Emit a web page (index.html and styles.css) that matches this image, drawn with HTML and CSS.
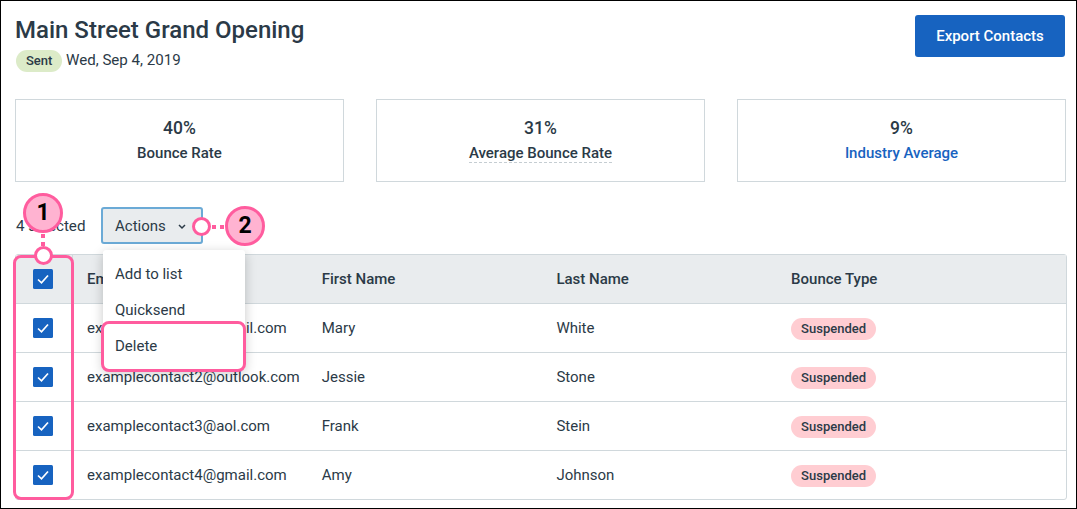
FILE: index.html
```html
<!DOCTYPE html>
<html lang="en">
<head>
  <meta charset="UTF-8" />
  <title>Main Street Grand Opening</title>
  <link rel="stylesheet" href="styles.css">
</head>
<body>
  <div class="frame">
    <div class="header">
      <div>
        <h1>Main Street Grand Opening</h1>
        <div class="meta"><span class="pill pill-green">Sent</span> <span>Wed, Sep 4, 2019</span></div>
      </div>
      <button class="export">Export Contacts</button>
    </div>

    <div class="stats">
      <div class="stat"><div class="stat-num">40%</div><div class="stat-label">Bounce Rate</div></div>
      <div class="stat"><div class="stat-num">31%</div><div class="stat-label dashed">Average Bounce Rate</div></div>
      <div class="stat"><div class="stat-num">9%</div><div class="stat-label link">Industry Average</div></div>
    </div>

    <div class="toolbar">
      <span class="selected">4 selected</span>
      <button class="actions">Actions
        <svg width="8" height="6" viewBox="0 0 8 6"><path d="M1 1l3 3 3-3" fill="none" stroke="#2b3a47" stroke-width="1.5"/></svg>
      </button>
    </div>

    <div class="table">
      <div class="row head">
        <div class="check"><svg class="box" viewBox="0 0 20 20"><rect width="20" height="20" rx="1.5" fill="#1763c0"/><path d="M5 10.5l3.5 3.3L15 6.5" fill="none" stroke="#fff" stroke-width="1.7"/></svg></div>
        <div>Email</div><div>First Name</div><div>Last Name</div><div>Bounce Type</div>
      </div>
      <div class="row">
        <div class="check"><svg class="box" viewBox="0 0 20 20"><rect width="20" height="20" rx="1.5" fill="#1763c0"/><path d="M5 10.5l3.5 3.3L15 6.5" fill="none" stroke="#fff" stroke-width="1.7"/></svg></div>
        <div>examplecontact1@gmail.com</div><div>Mary</div><div>White</div><div><span class="pill pill-red">Suspended</span></div>
      </div>
      <div class="row">
        <div class="check"><svg class="box" viewBox="0 0 20 20"><rect width="20" height="20" rx="1.5" fill="#1763c0"/><path d="M5 10.5l3.5 3.3L15 6.5" fill="none" stroke="#fff" stroke-width="1.7"/></svg></div>
        <div>examplecontact2@outlook.com</div><div>Jessie</div><div>Stone</div><div><span class="pill pill-red">Suspended</span></div>
      </div>
      <div class="row">
        <div class="check"><svg class="box" viewBox="0 0 20 20"><rect width="20" height="20" rx="1.5" fill="#1763c0"/><path d="M5 10.5l3.5 3.3L15 6.5" fill="none" stroke="#fff" stroke-width="1.7"/></svg></div>
        <div>examplecontact3@aol.com</div><div>Frank</div><div>Stein</div><div><span class="pill pill-red">Suspended</span></div>
      </div>
      <div class="row">
        <div class="check"><svg class="box" viewBox="0 0 20 20"><rect width="20" height="20" rx="1.5" fill="#1763c0"/><path d="M5 10.5l3.5 3.3L15 6.5" fill="none" stroke="#fff" stroke-width="1.7"/></svg></div>
        <div>examplecontact4@gmail.com</div><div>Amy</div><div>Johnson</div><div><span class="pill pill-red">Suspended</span></div>
      </div>
    </div>

    <!-- dropdown and callouts sit over the table -->
    <div class="menu">
      <div class="menu-item">Add to list</div>
      <div class="menu-item">Quicksend</div>
      <div class="menu-item">Delete</div>
    </div>
    <div class="mark mark-column"></div>
    <div class="mark mark-delete"></div>
    <div class="dots dots-v"></div>
    <div class="dots dots-h"></div>
    <div class="ring ring-1"></div>
    <div class="ring ring-2"></div>
    <div class="badge badge-1">1</div>
    <div class="badge badge-2">2</div>
  </div>
</body>
</html>
```

FILE: styles.css
```css
* { box-sizing: border-box; }
body { margin: 0; background: #fff; font-family: 'Roboto', sans-serif; color: #2b3a47; font-size: 15px; }
.frame {
  position: relative; width: 1077px; height: 509px; overflow: hidden; background: #fff;
  border: 1px solid #000; padding: 14px 10px 0 14px;
}
.header { display: flex; justify-content: space-between; align-items: flex-start; height: 84px; }
h1 { margin: 0; font-size: 24px; line-height: 30px; font-weight: 500; }
.meta { display: flex; align-items: center; gap: 4px; margin-top: 3px; font-size: 15.1px; color: #2b3a47; }
.pill { display: inline-block; border-radius: 11px; font-size: 13px; font-weight: 500; line-height: 22px; height: 22px; }
.pill-green { background: #dcebc8; padding: 0 10px; margin-left: 1px; margin-top: 2px; width: 46px; }
.pill-red { background: #ffcdd2; width: 85px; text-align: center; position: relative; top: 1px; }
.export {
  width: 150px; height: 42px; margin-right: 1px; background: #1763c0; color: #fff; border: none; border-radius: 3px;
  font-family: inherit; font-size: 15px; font-weight: 500; padding-top: 1px;
}
.stats { display: flex; gap: 32px; width: 1051px; }
.stat {
  flex: 1; height: 83px; border: 1px solid #d0d8dc; text-align: center; padding-top: 17px;
  font-weight: 500;
}
.stat-num { font-size: 17.5px; line-height: 22px; }
.stat-label { font-size: 15px; line-height: 20px; margin-top: 4px; }
.dashed { display: inline-block; border-bottom: 1px dashed #c5cdd2; line-height: 18px; margin-top: 5px; }
.link { color: #1763c0; }
.toolbar { display: flex; align-items: center; height: 37px; margin-top: 25px; }
.selected { width: 86px; font-size: 15.2px; padding-left: 1px; }
.actions {
  width: 102px; height: 37px; background: #e9ecee; border: 2px solid #6baad6; border-radius: 3px;
  font-family: inherit; font-size: 15px; color: #2b3a47; text-align: left; padding: 0 0 0 12px;
}
.actions svg { margin-left: 8px; vertical-align: 1px; }
.table { width: 1052px; margin-top: 10px; border: 1px solid #d0d8dc; border-radius: 3px; }
.row {
  display: grid; grid-template-columns: 57px 234.7px 234.7px 234.7px 1fr; align-items: center;
  height: 49px; border-top: 1px solid #d0d8dc; padding-right: 10px;
}
.row > div:nth-child(n+2) { padding-left: 14px; }
.row:first-child { border-top: none; height: 48px; }
.head { background: #e9ecee; font-weight: 500; }
.check { display: flex; justify-content: center; height: 100%; align-items: center; padding-right: 3px; }
.head .check { border-right: 1px solid #d0d8dc; }
.box { width: 20px; height: 20px; }
.menu {
  position: absolute; left: 102px; top: 249px; width: 142px; height: 120px; background: #fff;
  border-radius: 3px; box-shadow: 0 3px 12px rgba(0,0,0,0.22); padding-top: 6px;
}
.menu-item { height: 36px; line-height: 36px; padding-left: 12px; }
.mark { position: absolute; border: 3px solid #ff5c9e; border-radius: 8px; }
.mark-column { left: 12px; top: 254px; width: 61px; height: 245px; }
.mark-delete { left: 100px; top: 320px; width: 145px; height: 51px; }
.dots { position: absolute; }
.dots-v { left: 40px; top: 233px; width: 4px; height: 13px; background: repeating-linear-gradient(to bottom, #ff5c9e 0 4px, transparent 4px 8px); }
.dots-h { left: 211px; top: 224px; width: 13px; height: 4px; background: repeating-linear-gradient(to right, #ff5c9e 0 4px, transparent 4px 8px); }
.ring { position: absolute; width: 19px; height: 19px; background: #fff; border: 3px solid #ff5c9e; border-radius: 50%; }
.ring-1 { left: 33px; top: 245px; }
.ring-2 { left: 191px; top: 216px; }
.badge {
  position: absolute; width: 40px; height: 40px; background: #ffb3d1; border: 3px solid #ff5c9e; border-radius: 50%;
  color: #000; font-family: 'Roboto', sans-serif; font-weight: 700; font-size: 23px; line-height: 34px; text-align: center;
}
.badge-1 { left: 22px; top: 192px; }
.badge-2 { left: 224px; top: 205px; }
```
